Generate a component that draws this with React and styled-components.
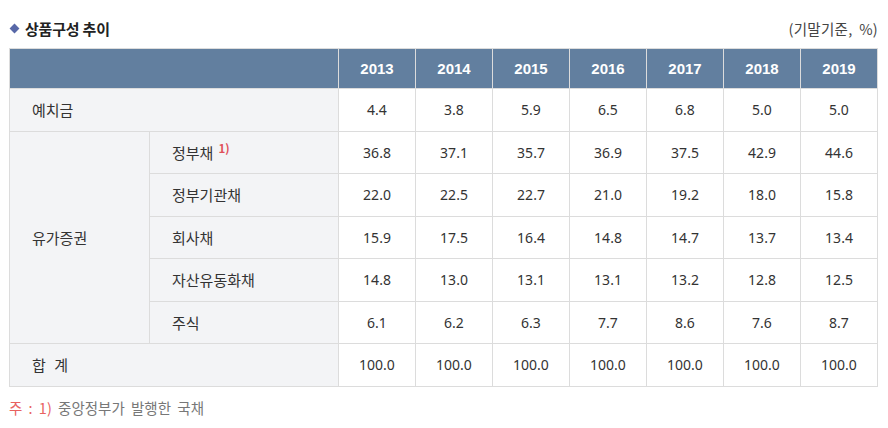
import React from "react";
import styled, { createGlobalStyle } from "styled-components";

const Global = createGlobalStyle`
  html, body { margin: 0; padding: 0; background: #fff; }
  body { font-family: "Noto Sans CJK KR", "Noto Sans", sans-serif; color: #333; }
`;

const Page = styled.div`
  padding: 15px 10px 0 9px;
  width: 869px;
`;

const TitleBar = styled.div`
  display: flex;
  align-items: center;
  justify-content: space-between;
  height: 26px;
  margin-bottom: 7px;
`;

const Title = styled.h2`
  display: flex;
  align-items: center;
  gap: 7px;
  margin: 0;
  font-size: 15px;
  font-weight: 700;
  color: #222;
  letter-spacing: -0.2px;
`;

const Diamond = styled.span`
  width: 7px;
  height: 7px;
  margin-left: 2px;
  background: #5868a8;
  transform: rotate(45deg);
`;

const Unit = styled.span`
  font-size: 14.5px;
  color: #444;
  word-spacing: 3px;
  letter-spacing: 0.3px;
`;

const Table = styled.table`
  width: 869px;
  border-collapse: collapse;
  table-layout: fixed;
  font-size: 15px;
`;

const HeadCell = styled.th`
  height: 39px;
  padding: 0;
  background: #627f9f;
  color: #fff;
  font-weight: 700;
  font-size: 15px;
  border: 1px solid #dcdcdc;
  font-family: "Liberation Sans", Arial, sans-serif;
`;

const LabelCell = styled.td`
  height: 41.5px;
  padding: 0 0 0 22px;
  background: #f3f4f6;
  border: 1px solid #dcdcdc;
  text-align: left;
  color: #333;
  font-size: 15px;
  word-spacing: ${(p) => (p.$spaced ? "5px" : "0")};
`;

const NumCell = styled.td`
  padding: 0;
  background: #fff;
  border: 1px solid #dcdcdc;
  text-align: center;
  color: #333;
  font-family: "Noto Sans", sans-serif;
  font-size: 14px;
`;

const Sup = styled.sup`
  color: #e0505a;
  font-size: 11.5px;
  font-weight: 700;
  margin-left: 5px;
  vertical-align: 6px;
  line-height: 0;
`;

const Note = styled.p`
  margin: 10px 0 0 0;
  font-size: 14.5px;
  word-spacing: 3px;
  color: #777;
`;

const NoteMark = styled.span`
  color: #e8625f;
`;

const years = [2013, 2014, 2015, 2016, 2017, 2018, 2019];

const rows = [
  { cat: "예치금", values: ["4.4", "3.8", "5.9", "6.5", "6.8", "5.0", "5.0"] },
  { group: true, sub: "정부채", sup: "1)", values: ["36.8", "37.1", "35.7", "36.9", "37.5", "42.9", "44.6"] },
  { group: true, sub: "정부기관채", values: ["22.0", "22.5", "22.7", "21.0", "19.2", "18.0", "15.8"] },
  { group: true, sub: "회사채", values: ["15.9", "17.5", "16.4", "14.8", "14.7", "13.7", "13.4"] },
  { group: true, sub: "자산유동화채", values: ["14.8", "13.0", "13.1", "13.1", "13.2", "12.8", "12.5"] },
  { group: true, sub: "주식", values: ["6.1", "6.2", "6.3", "7.7", "8.6", "7.6", "8.7"] },
  { cat: "합 계", spaced: true, values: ["100.0", "100.0", "100.0", "100.0", "100.0", "100.0", "100.0"] },
];

export default function App() {
  let groupStarted = false;
  return (
    <Page>
      <Global />
      <TitleBar>
        <Title>
          <Diamond />
          상품구성 추이
        </Title>
        <Unit>(기말기준, %)</Unit>
      </TitleBar>
      <Table>
        <colgroup>
          <col style={{ width: 140 }} />
          <col style={{ width: 189 }} />
          {years.map((y) => (
            <col key={y} style={{ width: 77 }} />
          ))}
        </colgroup>
        <thead>
          <tr>
            <HeadCell colSpan={2} />
            {years.map((y) => (
              <HeadCell key={y}>{y}</HeadCell>
            ))}
          </tr>
        </thead>
        <tbody>
          {rows.map((r, i) => {
            let first = null;
            if (r.group && !groupStarted) {
              groupStarted = true;
              first = <LabelCell rowSpan={5}>유가증권</LabelCell>;
            }
            return (
              <tr key={i}>
                {r.group ? (
                  <>
                    {first}
                    <LabelCell>
                      {r.sub}
                      {r.sup && <Sup>{r.sup}</Sup>}
                    </LabelCell>
                  </>
                ) : (
                  <LabelCell colSpan={2} $spaced={r.spaced}>
                    {r.cat}
                  </LabelCell>
                )}
                {r.values.map((v, j) => (
                  <NumCell key={j}>{v}</NumCell>
                ))}
              </tr>
            );
          })}
        </tbody>
      </Table>
      <Note>
        <NoteMark>주 : 1)</NoteMark> 중앙정부가 발행한 국채
      </Note>
    </Page>
  );
}
